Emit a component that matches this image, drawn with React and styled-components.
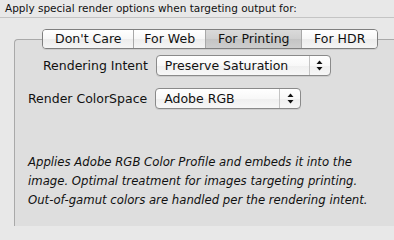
import React from "react";
import styled, { createGlobalStyle } from "styled-components";

const Global = createGlobalStyle`
  html, body { margin: 0; padding: 0; }
  body {
    width: 394px; height: 226px; overflow: hidden;
    background: #e8e8e8;
    font-family: "Lucida Grande", "DejaVu Sans", sans-serif;
    color: #000;
  }
`;

const Window = styled.div`
  width: 394px;
  height: 226px;
  display: flex;
  flex-direction: column;
  background: #e8e8e8;
`;

const Header = styled.div`
  height: 17px;
  line-height: 17px;
  padding-left: 5px;
  font-size: 10.5px;
  color: #111;
  border-bottom: 1px solid #c4c4c4;
  white-space: nowrap;
`;

const Body = styled.div`
  flex: 1;
  padding: 21px 0 0 14px;
  display: flex;
`;

const Panel = styled.div`
  flex: 1;
  background: #dedede;
  border-top: 1px solid #a9a9a9;
  border-left: 1px solid #a9a9a9;
  border-top-left-radius: 4px;
  display: flex;
  flex-direction: column;
`;

const TabBar = styled.div`
  display: flex;
  margin: -11px 0 0 27px;
  width: 336px;
  height: 20px;
  box-sizing: border-box;
  border: 1px solid #7f7f7f;
  border-radius: 4px;
  overflow: hidden;
  box-shadow: 0 1px 0 rgba(0,0,0,0.08);
`;

const Tab = styled.div`
  width: ${(p) => p.$w}px;
  box-sizing: border-box;
  display: flex;
  align-items: center;
  justify-content: center;
  font-size: 12.5px;
  line-height: 18px;
  color: #111;
  background: ${(p) =>
    p.$active
      ? "linear-gradient(#dadada, #cfcfcf 50%, #c4c4c4 51%, #cecece)"
      : "linear-gradient(#ffffff, #f7f7f7 50%, #ececec 51%, #f5f5f5)"};
  border-left: ${(p) => (p.$first ? "none" : "1px solid #a8a8a8")};
`;

const Row = styled.div`
  display: flex;
  align-items: center;
  padding-left: ${(p) => p.$indent}px;
  margin-top: ${(p) => p.$top}px;
  gap: ${(p) => p.$gap}px;
`;

const Label = styled.span`
  font-size: 12.5px;
  color: #111;
  white-space: nowrap;
`;

const Popup = styled.div`
  width: ${(p) => p.$w}px;
  height: 21px;
  box-sizing: border-box;
  border: 1px solid #8a8a8a;
  border-radius: 4px;
  background: linear-gradient(#ffffff, #f8f8f8 50%, #efefef 51%, #f7f7f7);
  box-shadow: 0 1px 0 rgba(0,0,0,0.08);
  display: flex;
  align-items: stretch;
`;

const PopupText = styled.span`
  flex: 1;
  padding-left: 8px;
  font-size: 12.5px;
  line-height: 19px;
  color: #111;
  white-space: nowrap;
`;

const Arrows = styled.span`
  width: 20px;
  border-left: 1px solid #c4c4c4;
  display: flex;
  align-items: center;
  justify-content: center;
`;

const Desc = styled.div`
  margin-top: 44px;
  padding-left: 13px;
  font-family: Verdana, "DejaVu Sans", sans-serif;
  font-style: italic;
  font-size: 11.7px;
  line-height: 19px;
  color: #111;
  white-space: nowrap;
`;

const ArrowIcon = () => (
  <svg width="7" height="11" viewBox="0 0 7 11">
    <path d="M3.5 0.5 L6.5 4 L0.5 4 Z" fill="#111" />
    <path d="M0.5 7 L6.5 7 L3.5 10.5 Z" fill="#111" />
  </svg>
);

export default function App() {
  return (
    <>
      <Global />
      <Window>
        <Header>Apply special render options when targeting output for:</Header>
        <Body>
          <Panel>
            <TabBar>
              <Tab $w={91} $first>Don't Care</Tab>
              <Tab $w={72}>For Web</Tab>
              <Tab $w={97} $active>For Printing</Tab>
              <Tab $w={76}>For HDR</Tab>
            </TabBar>
            <Row $indent={28} $top={6} $gap={8}>
              <Label>Rendering Intent</Label>
              <Popup $w={175}>
                <PopupText>Preserve Saturation</PopupText>
                <Arrows><ArrowIcon /></Arrows>
              </Popup>
            </Row>
            <Row $indent={13} $top={12} $gap={8}>
              <Label>Render ColorSpace</Label>
              <Popup $w={146}>
                <PopupText>Adobe RGB</PopupText>
                <Arrows><ArrowIcon /></Arrows>
              </Popup>
            </Row>
            <Desc>
              Applies Adobe RGB Color Profile and embeds it into the
              <br />
              image. Optimal treatment for images targeting printing.
              <br />
              Out-of-gamut colors are handled per the rendering intent.
            </Desc>
          </Panel>
        </Body>
      </Window>
    </>
  );
}
